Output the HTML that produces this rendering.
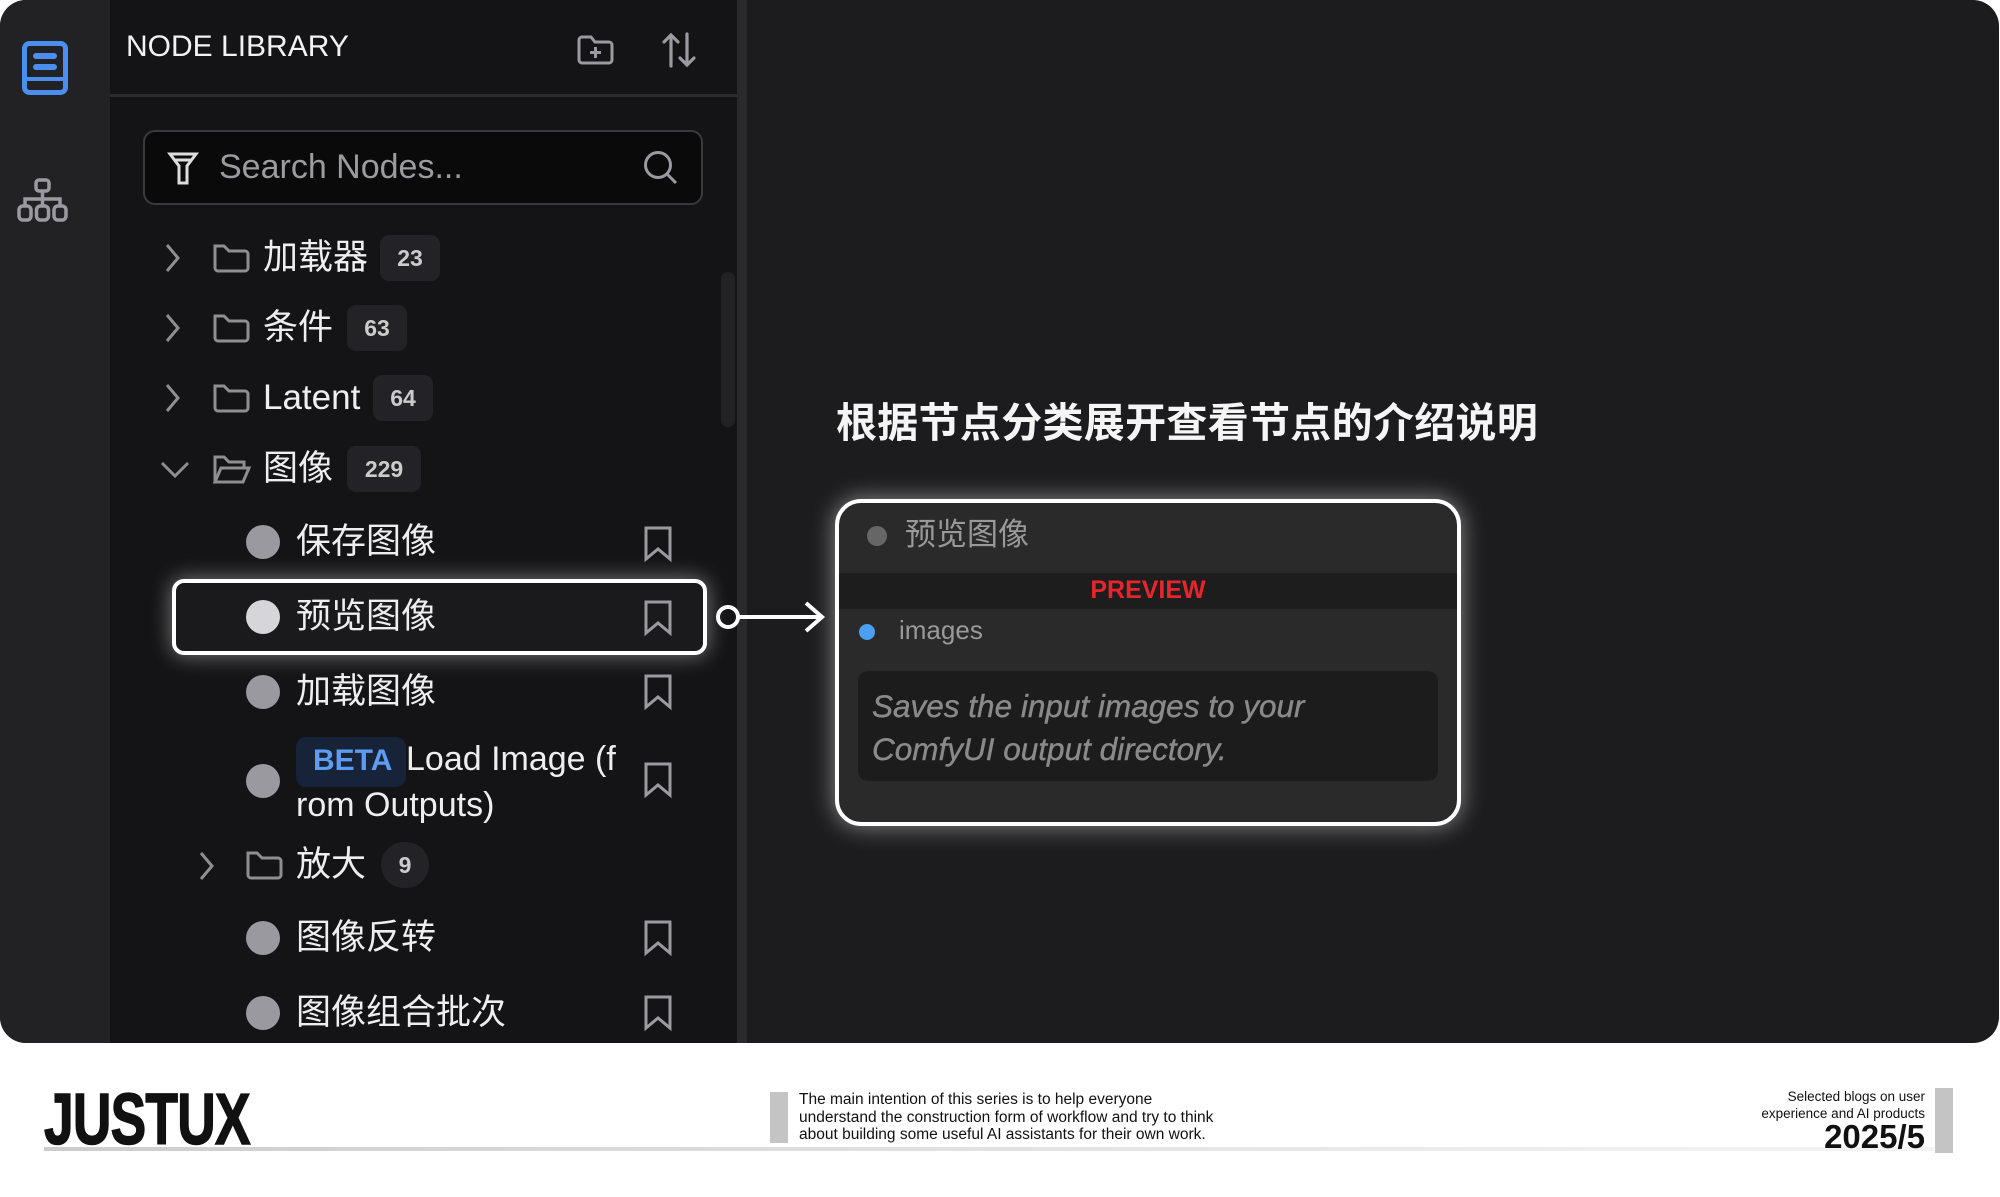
<!DOCTYPE html>
<html><head><meta charset="utf-8"><style>
*{margin:0;padding:0;box-sizing:border-box}
body{width:2000px;height:1197px;background:#fff;position:relative;overflow:hidden;font-family:"Liberation Sans","Noto Sans CJK SC",sans-serif}
.a{position:absolute}
#panel{left:0;top:0;width:1999px;height:1043px;background:#1c1c1e;border-radius:26px;overflow:hidden}
#rail{left:0;top:0;width:110px;height:1043px;background:#222224}
#side{left:110px;top:0;width:627px;height:1043px;background:#141416}
#div{left:737px;top:0;width:10px;height:1043px;background:#2a2a2c}
.t{color:#eee;font-size:35px;white-space:nowrap;line-height:1}
.badge{background:#232327;border-radius:9px;color:#ccc;font-weight:bold;font-size:23px;text-align:center;line-height:46px;height:46px}
.dot{width:34px;height:34px;border-radius:50%;background:#9a99a0}
svg{position:absolute;overflow:visible}
</style></head><body>
<div id="panel" class="a">
 <div id="rail" class="a"></div>
 <div id="side" class="a"></div>
 <div id="div" class="a"></div>
 <svg style="left:22px;top:41px" width="48" height="54"><rect x="2.5" y="2.5" width="41" height="49" rx="5" fill="none" stroke="#4a8fef" stroke-width="5"/><rect x="11" y="12" width="24" height="6" rx="3" fill="#4a8fef"/><rect x="11" y="23" width="24" height="6" rx="3" fill="#4a8fef"/><line x1="3" y1="38" x2="43" y2="38" stroke="#4a8fef" stroke-width="4"/></svg>
 <svg style="left:17px;top:178px" width="52" height="46" fill="none" stroke="#9a9aa0" stroke-width="3.5"><rect x="19" y="2" width="13" height="11" rx="3"/><path d="M25.5 13v8M8 27v-6h35v6M25.5 21v6"/><rect x="2" y="28" width="12" height="14" rx="4"/><rect x="19.5" y="28" width="12" height="14" rx="4"/><rect x="37" y="28" width="12" height="14" rx="4"/></svg>
 <div class="a t" style="left:126px;top:32px;font-size:30px;color:#f2f2f2">NODE LIBRARY</div>
 <svg style="left:578px;top:35px" width="36" height="30" fill="none" stroke="#9a9aa0" stroke-width="3"><path d="M4 2h9l4 5h14a3 3 0 0 1 3 3v15a3 3 0 0 1-3 3H4a3 3 0 0 1-3-3V5a3 3 0 0 1 3-3z"/><path d="M17.5 12v11M12 17.5h11"/></svg>
 <svg style="left:662px;top:32px" width="34" height="36" fill="none" stroke="#9a9aa0" stroke-width="3.2" stroke-linecap="round"><path d="M9 34V3M2 10l7-7 7 7M25 2v31M18 26l7 7 7-7"/></svg>
 <div class="a" style="left:110px;top:94px;width:627px;height:3px;background:#2c2c2f"></div>
 <div class="a" style="left:143px;top:130px;width:560px;height:75px;border:2px solid #3a3a3d;border-radius:12px;background:#0a0a0b"></div>
 <svg style="left:168px;top:152px" width="32" height="34" fill="none" stroke="#ddd" stroke-width="3"><path d="M2 2h26l-9 12v17h-8V14z"/><path d="M6 8h18"/></svg>
 <div class="a t" style="left:219px;top:150px;font-size:34px;color:#9b9ba0">Search Nodes...</div>
 <svg style="left:643px;top:150px" width="36" height="36" fill="none" stroke="#9a9aa0" stroke-width="3"><circle cx="15" cy="15" r="12.5"/><path d="M24 24l9 9"/></svg>
 <div class="a" style="left:721px;top:272px;width:14px;height:155px;border-radius:7px;background:#222225"></div>
 <svg style="left:0;top:0" width="1" height="1" fill="none" stroke="#8e8e93" stroke-width="3">
  <path d="M167 245l11 13-11 13M167 315l11 13-11 13M167 385l11 13-11 13M162 463l13 13 13-13M201 853l11 13-11 13"/>
  <path d="M215 246h9l5 5h16a3 3 0 0 1 3 3v14a3 3 0 0 1-3 3h-27a3 3 0 0 1-3-3z"/>
  <path d="M215 316h9l5 5h16a3 3 0 0 1 3 3v14a3 3 0 0 1-3 3h-27a3 3 0 0 1-3-3z"/>
  <path d="M215 386h9l5 5h16a3 3 0 0 1 3 3v14a3 3 0 0 1-3 3h-27a3 3 0 0 1-3-3z"/>
  <path d="M215 482v-25h9l5 5h15v6M215 482l6-14h28l-6 14z"/>
  <path d="M248 853h9l5 5h16a3 3 0 0 1 3 3v14a3 3 0 0 1-3 3h-27a3 3 0 0 1-3-3z"/>
 </svg>
 <div class="a t" style="left:263px;top:240px">加载器</div><div class="a badge" style="left:380px;top:235px;width:60px">23</div>
 <div class="a t" style="left:263px;top:310px">条件</div><div class="a badge" style="left:347px;top:305px;width:60px">63</div>
 <div class="a t" style="left:263px;top:380px">Latent</div><div class="a badge" style="left:373px;top:375px;width:60px">64</div>
 <div class="a t" style="left:263px;top:451px">图像</div><div class="a badge" style="left:347px;top:446px;width:74px">229</div>
 <div class="a t" style="left:296px;top:847px">放大</div><div class="a badge" style="left:381px;top:842px;width:48px;border-radius:24px">9</div>
 <div class="a dot" style="left:246px;top:525px"></div><div class="a t" style="left:296px;top:524px">保存图像</div>
 <div class="a" style="left:172px;top:579px;width:535px;height:76px;border:4px solid #fff;border-radius:12px;background:#1a1a1d;box-shadow:0 0 22px rgba(255,255,255,.45)"></div>
 <div class="a dot" style="left:246px;top:600px;background:#d6d5da"></div><div class="a t" style="left:296px;top:599px">预览图像</div>
 <div class="a dot" style="left:246px;top:675px"></div><div class="a t" style="left:296px;top:674px">加载图像</div>
 <div class="a" style="left:296px;top:737px;width:110px;height:50px;border-radius:10px;background:#172338"></div>
 <div class="a t" style="left:313px;top:746px;font-size:30px;font-weight:bold;color:#5d9cf0">BETA</div>
 <div class="a t" style="left:406px;top:742px;font-size:34px">Load Image (f</div>
 <div class="a t" style="left:296px;top:788px;font-size:34px">rom Outputs)</div>
 <div class="a dot" style="left:246px;top:764px"></div>
 <div class="a dot" style="left:246px;top:921px"></div><div class="a t" style="left:296px;top:920px">图像反转</div>
 <div class="a dot" style="left:246px;top:996px"></div><div class="a t" style="left:296px;top:995px">图像组合批次</div>
 <svg style="left:0;top:0" width="1" height="1" fill="none" stroke="#9a9aa0" stroke-width="3">
  <path d="M646 528h24v31l-12-10-12 10z"/><path d="M646 602h24v31l-12-10-12 10z"/><path d="M646 676h24v31l-12-10-12 10z"/><path d="M646 764h24v31l-12-10-12 10z"/><path d="M646 922h24v31l-12-10-12 10z"/><path d="M646 997h24v31l-12-10-12 10z"/>
 </svg>
 <svg style="left:0;top:0" width="1" height="1" fill="none" stroke="#fff" stroke-width="4"><circle cx="728" cy="617" r="10"/><path d="M738 617h84M806 603l16 14-16 14"/></svg>
 <div class="a t" style="left:836px;top:403px;font-size:41px;font-weight:bold;color:#f5f5f5;letter-spacing:0.3px">根据节点分类展开查看节点的介绍说明</div>
 <div class="a" style="left:835px;top:499px;width:626px;height:327px;border:4px solid #fff;border-radius:26px;background:#2a2a2b;box-shadow:0 0 24px rgba(255,255,255,.5);overflow:hidden">
  <div class="a" style="left:0;top:70px;width:100%;height:36px;background:#1d1d1e"></div>
  <div class="a" style="left:28px;top:23px;width:20px;height:20px;border-radius:50%;background:#666"></div>
  <div class="a t" style="left:66px;top:16px;font-size:31px;color:#999">预览图像</div>
  <div class="a t" style="left:0;width:100%;text-align:center;top:75px;font-size:25px;font-weight:bold;color:#e8242c">PREVIEW</div>
  <div class="a" style="left:20px;top:121px;width:16px;height:16px;border-radius:50%;background:#4c9ff3"></div>
  <div class="a t" style="left:60px;top:114px;font-size:26px;color:#9a9a9a">images</div>
  <div class="a" style="left:19px;top:168px;width:580px;height:110px;border-radius:10px;background:#1c1c1d"></div>
  <div class="a" style="left:33px;top:182px;font-size:31.5px;font-style:italic;color:#8a8a8a;line-height:43px;-webkit-text-stroke:0.4px #8a8a8a">Saves the input images to your<br>ComfyUI output directory.</div>
 </div>
</div>
<div class="a" style="left:44px;top:1079px;font-size:72px;font-weight:900;color:#111;transform:scaleX(.74);transform-origin:left top;letter-spacing:-1px;-webkit-text-stroke:1.5px #111">JUSTUX</div>
<div class="a" style="left:44px;top:1147px;width:1890px;height:4px;background:linear-gradient(90deg,#ccc,#e6e6e6 60%,#f4f4f4)"></div>
<div class="a" style="left:770px;top:1092px;width:18px;height:51px;background:#c4c4c4"></div>
<div class="a" style="left:799px;top:1091px;font-size:15.5px;line-height:17.5px;color:#111">The main intention of this series is to help everyone<br>understand the construction form of workflow and try to think<br>about building some useful AI assistants for their own work.</div>
<div class="a" style="left:1935px;top:1088px;width:18px;height:65px;background:#c4c4c4"></div>
<div class="a" style="right:75px;top:1088px;font-size:13.5px;line-height:17px;color:#111;text-align:right">Selected blogs on user<br>experience and AI products</div>
<div class="a" style="right:75px;top:1118px;font-size:33px;font-weight:bold;color:#111">2025/5</div>
</body></html>
